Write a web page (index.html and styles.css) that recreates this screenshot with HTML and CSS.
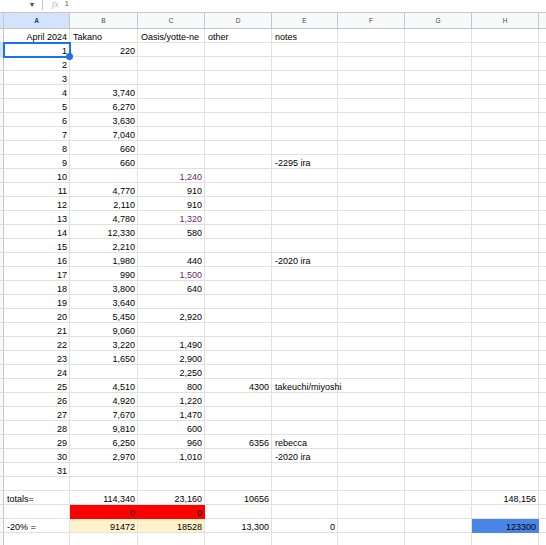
FILE: index.html
```html
<!DOCTYPE html>
<html>
<head>
<meta charset="utf-8">
<link rel="stylesheet" href="styles.css">
</head>
<body>
<div class="sheet">
  <div class="topbar">
    <span class="arrow">&#9662;</span>
    <span class="sep"></span>
    <span class="fx">fx</span>
    <span class="fval">1</span>
  </div>
  <div class="row head">
    <div class="c strip sel"></div>
    <div class="c sel">A</div><div class="c">B</div><div class="c">C</div><div class="c">D</div><div class="c">E</div><div class="c">F</div><div class="c">G</div><div class="c">H</div><div class="c last"></div>
  </div>
  <div class="row"><div class="c strip"></div><div class="c r">April 2024</div><div class="c">Takano</div><div class="c">Oasis/yotte-ne</div><div class="c">other</div><div class="c">notes</div><div class="c"></div><div class="c"></div><div class="c"></div><div class="c last"></div></div>
  <div class="row"><div class="c strip selstrip"></div><div class="c r active">1<span class="handle"></span></div><div class="c r">220</div><div class="c"></div><div class="c"></div><div class="c"></div><div class="c"></div><div class="c"></div><div class="c"></div><div class="c last"></div></div>
  <div class="row"><div class="c strip"></div><div class="c r">2</div><div class="c"></div><div class="c"></div><div class="c"></div><div class="c"></div><div class="c"></div><div class="c"></div><div class="c"></div><div class="c last"></div></div>
  <div class="row"><div class="c strip"></div><div class="c r">3</div><div class="c"></div><div class="c"></div><div class="c"></div><div class="c"></div><div class="c"></div><div class="c"></div><div class="c"></div><div class="c last"></div></div>
  <div class="row"><div class="c strip"></div><div class="c r">4</div><div class="c r">3,740</div><div class="c"></div><div class="c"></div><div class="c"></div><div class="c"></div><div class="c"></div><div class="c"></div><div class="c last"></div></div>
  <div class="row"><div class="c strip"></div><div class="c r">5</div><div class="c r">6,270</div><div class="c"></div><div class="c"></div><div class="c"></div><div class="c"></div><div class="c"></div><div class="c"></div><div class="c last"></div></div>
  <div class="row"><div class="c strip"></div><div class="c r">6</div><div class="c r">3,630</div><div class="c"></div><div class="c"></div><div class="c"></div><div class="c"></div><div class="c"></div><div class="c"></div><div class="c last"></div></div>
  <div class="row"><div class="c strip"></div><div class="c r">7</div><div class="c r">7,040</div><div class="c"></div><div class="c"></div><div class="c"></div><div class="c"></div><div class="c"></div><div class="c"></div><div class="c last"></div></div>
  <div class="row"><div class="c strip"></div><div class="c r">8</div><div class="c r">660</div><div class="c"></div><div class="c"></div><div class="c"></div><div class="c"></div><div class="c"></div><div class="c"></div><div class="c last"></div></div>
  <div class="row"><div class="c strip"></div><div class="c r">9</div><div class="c r">660</div><div class="c"></div><div class="c"></div><div class="c">-2295 ira</div><div class="c"></div><div class="c"></div><div class="c"></div><div class="c last"></div></div>
  <div class="row"><div class="c strip"></div><div class="c r">10</div><div class="c"></div><div class="c r purple">1,240</div><div class="c"></div><div class="c"></div><div class="c"></div><div class="c"></div><div class="c"></div><div class="c last"></div></div>
  <div class="row"><div class="c strip"></div><div class="c r">11</div><div class="c r">4,770</div><div class="c r">910</div><div class="c"></div><div class="c"></div><div class="c"></div><div class="c"></div><div class="c"></div><div class="c last"></div></div>
  <div class="row"><div class="c strip"></div><div class="c r">12</div><div class="c r">2,110</div><div class="c r">910</div><div class="c"></div><div class="c"></div><div class="c"></div><div class="c"></div><div class="c"></div><div class="c last"></div></div>
  <div class="row"><div class="c strip"></div><div class="c r">13</div><div class="c r">4,780</div><div class="c r purple">1,320</div><div class="c"></div><div class="c"></div><div class="c"></div><div class="c"></div><div class="c"></div><div class="c last"></div></div>
  <div class="row"><div class="c strip"></div><div class="c r">14</div><div class="c r">12,330</div><div class="c r">580</div><div class="c"></div><div class="c"></div><div class="c"></div><div class="c"></div><div class="c"></div><div class="c last"></div></div>
  <div class="row"><div class="c strip"></div><div class="c r">15</div><div class="c r">2,210</div><div class="c"></div><div class="c"></div><div class="c"></div><div class="c"></div><div class="c"></div><div class="c"></div><div class="c last"></div></div>
  <div class="row"><div class="c strip"></div><div class="c r">16</div><div class="c r">1,980</div><div class="c r">440</div><div class="c"></div><div class="c">-2020 ira</div><div class="c"></div><div class="c"></div><div class="c"></div><div class="c last"></div></div>
  <div class="row"><div class="c strip"></div><div class="c r">17</div><div class="c r">990</div><div class="c r purple">1,500</div><div class="c"></div><div class="c"></div><div class="c"></div><div class="c"></div><div class="c"></div><div class="c last"></div></div>
  <div class="row"><div class="c strip"></div><div class="c r">18</div><div class="c r">3,800</div><div class="c r">640</div><div class="c"></div><div class="c"></div><div class="c"></div><div class="c"></div><div class="c"></div><div class="c last"></div></div>
  <div class="row"><div class="c strip"></div><div class="c r">19</div><div class="c r">3,640</div><div class="c"></div><div class="c"></div><div class="c"></div><div class="c"></div><div class="c"></div><div class="c"></div><div class="c last"></div></div>
  <div class="row"><div class="c strip"></div><div class="c r">20</div><div class="c r">5,450</div><div class="c r">2,920</div><div class="c"></div><div class="c"></div><div class="c"></div><div class="c"></div><div class="c"></div><div class="c last"></div></div>
  <div class="row"><div class="c strip"></div><div class="c r">21</div><div class="c r">9,060</div><div class="c"></div><div class="c"></div><div class="c"></div><div class="c"></div><div class="c"></div><div class="c"></div><div class="c last"></div></div>
  <div class="row"><div class="c strip"></div><div class="c r">22</div><div class="c r">3,220</div><div class="c r">1,490</div><div class="c"></div><div class="c"></div><div class="c"></div><div class="c"></div><div class="c"></div><div class="c last"></div></div>
  <div class="row"><div class="c strip"></div><div class="c r">23</div><div class="c r">1,650</div><div class="c r">2,900</div><div class="c"></div><div class="c"></div><div class="c"></div><div class="c"></div><div class="c"></div><div class="c last"></div></div>
  <div class="row"><div class="c strip"></div><div class="c r">24</div><div class="c"></div><div class="c r">2,250</div><div class="c"></div><div class="c"></div><div class="c"></div><div class="c"></div><div class="c"></div><div class="c last"></div></div>
  <div class="row"><div class="c strip"></div><div class="c r">25</div><div class="c r">4,510</div><div class="c r">800</div><div class="c r">4300</div><div class="c">takeuchi/miyoshi</div><div class="c"></div><div class="c"></div><div class="c"></div><div class="c last"></div></div>
  <div class="row"><div class="c strip"></div><div class="c r">26</div><div class="c r">4,920</div><div class="c r">1,220</div><div class="c"></div><div class="c"></div><div class="c"></div><div class="c"></div><div class="c"></div><div class="c last"></div></div>
  <div class="row"><div class="c strip"></div><div class="c r">27</div><div class="c r">7,670</div><div class="c r">1,470</div><div class="c"></div><div class="c"></div><div class="c"></div><div class="c"></div><div class="c"></div><div class="c last"></div></div>
  <div class="row"><div class="c strip"></div><div class="c r">28</div><div class="c r">9,810</div><div class="c r">600</div><div class="c"></div><div class="c"></div><div class="c"></div><div class="c"></div><div class="c"></div><div class="c last"></div></div>
  <div class="row"><div class="c strip"></div><div class="c r">29</div><div class="c r">6,250</div><div class="c r">960</div><div class="c r">6356</div><div class="c">rebecca</div><div class="c"></div><div class="c"></div><div class="c"></div><div class="c last"></div></div>
  <div class="row"><div class="c strip"></div><div class="c r">30</div><div class="c r">2,970</div><div class="c r">1,010</div><div class="c"></div><div class="c">-2020 ira</div><div class="c"></div><div class="c"></div><div class="c"></div><div class="c last"></div></div>
  <div class="row"><div class="c strip"></div><div class="c r">31</div><div class="c"></div><div class="c"></div><div class="c"></div><div class="c"></div><div class="c"></div><div class="c"></div><div class="c"></div><div class="c last"></div></div>
  <div class="row"><div class="c strip"></div><div class="c"></div><div class="c"></div><div class="c"></div><div class="c"></div><div class="c"></div><div class="c"></div><div class="c"></div><div class="c"></div><div class="c last"></div></div>
  <div class="row"><div class="c strip"></div><div class="c">totals=</div><div class="c r">114,340</div><div class="c r">23,160</div><div class="c r">10656</div><div class="c"></div><div class="c"></div><div class="c"></div><div class="c r">148,156</div><div class="c last"></div></div>
  <div class="row"><div class="c strip"></div><div class="c"></div><div class="c r red">0</div><div class="c r red">0</div><div class="c"></div><div class="c"></div><div class="c"></div><div class="c"></div><div class="c"></div><div class="c last"></div></div>
  <div class="row"><div class="c strip"></div><div class="c">-20% =</div><div class="c r yellow">91472</div><div class="c r yellow">18528</div><div class="c r">13,300</div><div class="c r">0</div><div class="c"></div><div class="c"></div><div class="c r blue">123300</div><div class="c last"></div></div>
  <div class="row"><div class="c strip"></div><div class="c"></div><div class="c"></div><div class="c"></div><div class="c"></div><div class="c"></div><div class="c"></div><div class="c"></div><div class="c"></div><div class="c last"></div></div>
</div>
</body>
</html>
```
FILE: styles.css
```css
html, body {
  margin: 0;
  padding: 0;
  background: #ffffff;
}
body {
  font-family: "Liberation Sans", Arial, sans-serif;
  font-size: 9px;
  color: #000000;
  overflow: hidden;
}
.sheet {
  width: 546px;
}
.topbar {
  height: 13px;
  box-sizing: border-box;
  border-bottom: 1px solid #c7c7c7;
  display: flex;
  align-items: flex-start;
  color: #5f6368;
}
.arrow {
  margin-left: 30px;
  font-size: 8px;
  line-height: 10px;
  color: #444746;
}
.sep {
  width: 1px;
  height: 10px;
  background: #c7c7c7;
  margin-left: 8px;
}
.fx {
  margin-left: 9px;
  font-family: "Liberation Serif", serif;
  font-style: italic;
  font-size: 9px;
  line-height: 9px;
  color: #b0b0b0;
}
.fval {
  margin-left: 6px;
  font-size: 8px;
  line-height: 8px;
  color: #5f6368;
}
.row {
  display: grid;
  grid-template-columns: 4px 66px 68px 67px 67px 66px 67px 67px 67px 1fr;
  height: 14px;
}
.c {
  box-sizing: border-box;
  border-right: 1px solid #e1e1e1;
  border-bottom: 1px solid #e1e1e1;
  height: 14px;
  line-height: 16px;
  padding: 0 3px;
  white-space: nowrap;
  position: relative;
}
.c.r {
  text-align: right;
  padding-right: 2px;
}
.c.strip {
  padding: 0;
  background: #f8f9fa;
  border-right: 1px solid #c4c7c5;
}
.c.selstrip {
  background: #d3e3fd;
}
.c.last {
  border-right: none;
}
.head {
  height: 16px;
}
.head .c {
  height: 16px;
  line-height: 16px;
  text-align: center;
  font-size: 6.5px;
  color: #444746;
  background: #f8f9fa;
  border-right: 1px solid #c4c7c5;
  border-bottom: 1px solid #c4c7c5;
}
.head .c.sel {
  background: #d3e3fd;
  color: #0b3d91;
  font-weight: bold;
}
.head .c.last {
  border-right: none;
}
.purple {
  color: #6a1f66;
}
.red {
  background: #ff0000;
  border-color: #ff0000;
}
.yellow {
  background: #fff2cc;
}
.blue {
  background: #4a86e8;
  border-color: #4a86e8;
}
.active {
  outline: 2px solid #1a73e8;
  outline-offset: -1px;
  z-index: 2;
}
.handle {
  position: absolute;
  right: -4px;
  bottom: -4px;
  width: 7px;
  height: 7px;
  border-radius: 50%;
  background: #1a73e8;
  z-index: 3;
}
```
